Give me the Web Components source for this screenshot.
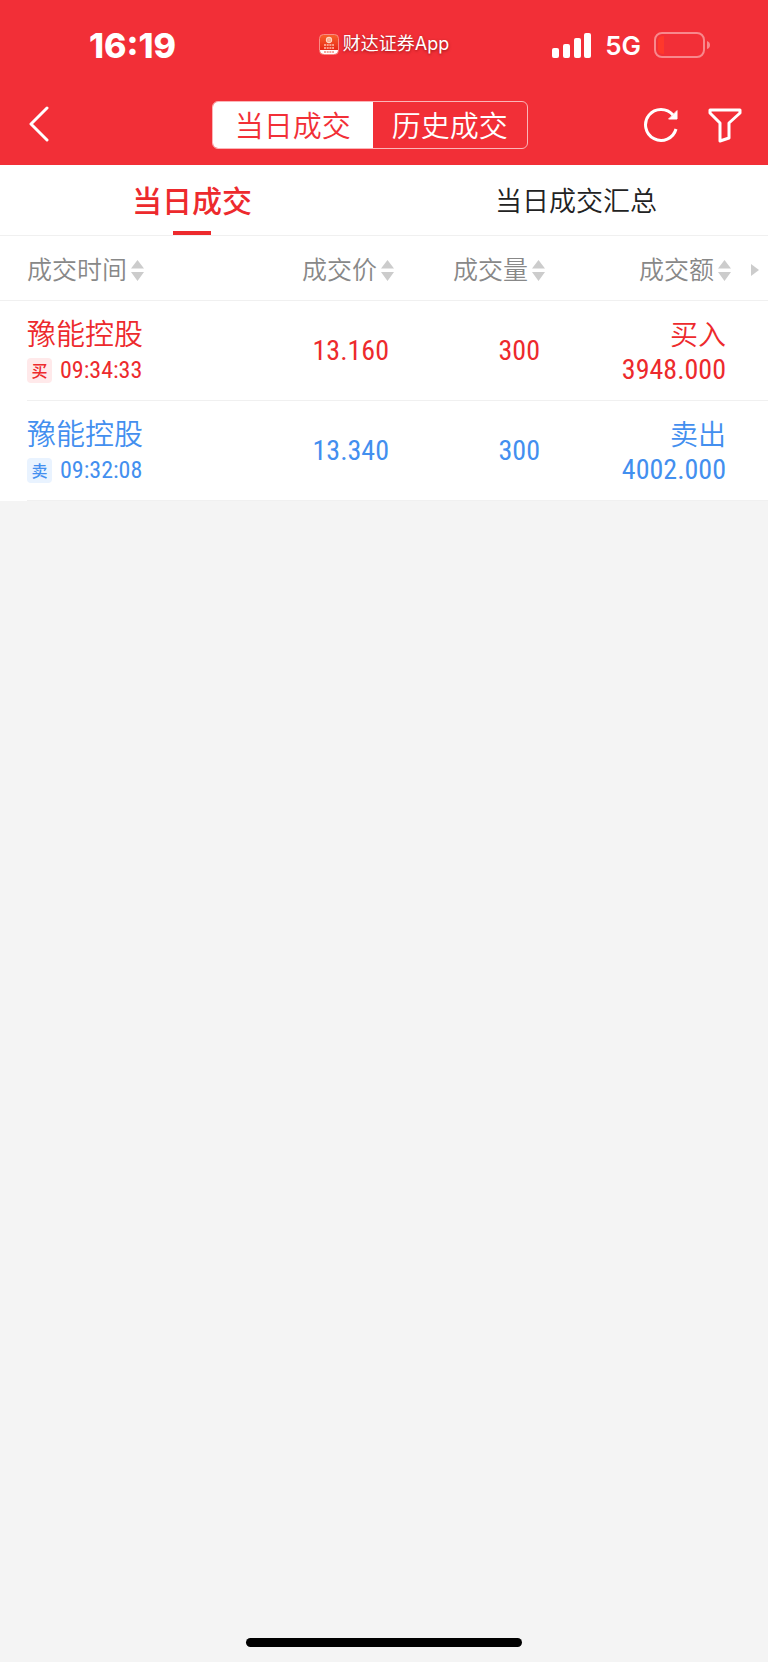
<!DOCTYPE html>
<html lang="zh-CN">
<head>
<meta charset="utf-8">
<meta name="viewport" content="width=device-width, initial-scale=1">
<title>当日成交</title>
<style>
  html {
    --red: #f22f37;
    --buy: #ed2a2d;
    --sell: #438fef;
    --line: #f0f0f0;
    --digits: "Roboto Condensed", Roboto, sans-serif;
    --strong: "Noto Sans CJK SC", sans-serif;
  }
  body {
    margin: 0;
    background: #f4f4f4;
    font-family: "Noto Sans CJK SC DemiLight", "Noto Sans CJK SC", sans-serif;
    font-weight: 350;
  }
</style>
</head>
<body>
<trade-app>
  <status-bar slot="top" time="16:19" network="5G">财达证券App</status-bar>
  <nav-bar slot="top"></nav-bar>
  <tab-bar></tab-bar>
  <deal-table></deal-table>
</trade-app>

<script>
class TradeApp extends HTMLElement {
  static styles = `
    <style>
      :host {
        display: flex;
        flex-direction: column;
        min-height: 100vh;
      }
      header {
        background: var(--red);
        color: #fff;
        padding-bottom: 16px;
      }
      main {
        flex: 1;
      }
      footer {
        display: flex;
        justify-content: center;
        padding-bottom: 15px;
      }
      .home {
        width: 36%;
        height: 9px;
        border-radius: 5px;
        background: #000;
      }
    </style>
  `;

  constructor() {
    super();
    this.attachShadow({ mode: "open" });
  }

  connectedCallback() {
    this.shadowRoot.innerHTML = `
      ${TradeApp.styles}
      <header><slot name="top"></slot></header>
      <main><slot></slot></main>
      <footer><div class="home"></div></footer>
    `;
  }
}

class StatusBar extends HTMLElement {
  static styles = `
    <style>
      :host {
        display: grid;
        grid-template-columns: 1fr auto 1fr;
        align-items: center;
        height: 87px;
        padding: 5px 58px 0;
        box-sizing: border-box;
        margin-bottom: 14px;
        font-family: Inter, "Noto Sans CJK SC", sans-serif;
      }
      svg {
        display: block;
      }
      .time {
        padding-left: 31px;
        font-size: 34px;
        line-height: 40px;
        font-weight: 800;
      }
      .app {
        display: flex;
        align-items: center;
        gap: 4px;
        padding-bottom: 4px;
        font-size: 18px;
        line-height: 24px;
        font-weight: 400;
        text-shadow: 0 1px 3px rgba(90, 0, 0, 0.6);
      }
      .right {
        display: flex;
        align-items: center;
        justify-content: flex-end;
        gap: 13px;
        font-size: 26px;
        line-height: 32px;
        font-weight: 600;
      }
    </style>
  `;

  constructor() {
    super();
    this.attachShadow({ mode: "open" });
  }

  connectedCallback() {
    this.shadowRoot.innerHTML = `
      ${StatusBar.styles}
      <div class="time">${this.getAttribute("time")}</div>
      <div class="app">
        <svg width="20" height="21" viewBox="0 0 20 21">
          <defs>
            <linearGradient id="g" x1="0" y1="0" x2="0" y2="1">
              <stop offset="0" stop-color="#f8622c"/>
              <stop offset="1" stop-color="#e3170f"/>
            </linearGradient>
          </defs>
          <rect x="0.5" y="0.5" width="19" height="20" rx="4" fill="url(#g)" stroke="#fa8b84"/>
          <path d="M1 16h18q0 4-4 4H5q-4 0-4-4z" fill="#fff"/>
          <circle cx="10" cy="6" r="2.5" fill="none" stroke="#ffd9c4" stroke-width="1.3"/>
          <path d="M10 4v4M8 6h4" stroke="#ffd9c4"/>
          <path d="M5 11h10M5 14h10" stroke="#ffc0ae" stroke-width="1.5" stroke-dasharray="2 .7"/>
          <path d="M5 18h10" stroke="#f08a80" stroke-width="1.5" stroke-dasharray="2 .7"/>
        </svg>
        <span><slot></slot></span>
      </div>
      <div class="right">
        <svg width="40" height="26" viewBox="0 0 40 26" fill="#fff">
          <rect x="0" y="15" width="7" height="10" rx="2"/>
          <rect x="11" y="11" width="7" height="14" rx="2"/>
          <rect x="22" y="5" width="7" height="20" rx="2"/>
          <rect x="32" y="0" width="7" height="25" rx="2"/>
        </svg>
        <span>${this.getAttribute("network")}</span>
        <svg width="56" height="28" viewBox="0 0 56 28">
          <rect x="1" y="1" width="49" height="24" rx="7" fill="none" stroke="#f8888c" stroke-width="2"/>
          <path d="M4 8q0-4 6-4v18q-6 0-6-4z" fill="#ff382b"/>
          <path d="M53 9q3 1 3 4t-3 4z" fill="#f8888c"/>
        </svg>
      </div>
    `;
  }
}

class NavBar extends HTMLElement {
  static styles = `
    <style>
      :host {
        display: grid;
        grid-template-columns: 6fr auto 7fr;
        align-items: center;
        padding: 0 26px 0 28px;
      }
      button {
        border: 0;
        padding: 0;
        background: none;
        color: inherit;
        font: inherit;
      }
      svg {
        display: block;
        fill: none;
        stroke: #fff;
        stroke-width: 3;
        stroke-linecap: round;
        stroke-linejoin: round;
      }
      .segment {
        display: flex;
        border: 1px solid #fbb5b8;
        border-radius: 6px;
        overflow: hidden;
      }
      .segment button {
        padding: 0 19px 2px;
        font-size: 29px;
        line-height: 44px;
      }
      .segment .on {
        padding: 0 22px 2px;
        background: #fff;
        color: var(--red);
      }
      .tools {
        display: flex;
        justify-content: flex-end;
        gap: 29px;
      }
    </style>
  `;

  constructor() {
    super();
    this.attachShadow({ mode: "open" });
  }

  connectedCallback() {
    this.shadowRoot.innerHTML = `
      ${NavBar.styles}
      <div>
        <button aria-label="返回">
          <svg width="22" height="38" viewBox="0 0 22 38"><path d="M19 4L3 20l16 16"/></svg>
        </button>
      </div>
      <div class="segment">
        <button class="on">当日成交</button>
        <button>历史成交</button>
      </div>
      <div class="tools">
        <button aria-label="刷新">
          <svg width="35" height="36" viewBox="0 0 35 36">
            <path d="M29 8A15.500 15.500 0 1 0 32 22" stroke-linecap="butt"/>
            <path d="M33 4v8h-8z" fill="#fff" stroke-width="1"/>
          </svg>
        </button>
        <button aria-label="筛选">
          <svg width="34" height="36" viewBox="0 0 34 36">
            <path d="M2 3h30v3L21 16v15l-9 3V16L2 6z"/>
          </svg>
        </button>
      </div>
    `;
  }
}

class TabBar extends HTMLElement {
  static styles = `
    <style>
      :host {
        display: flex;
        background: #fff;
        border-bottom: 1px solid var(--line);
      }
      button {
        flex: 1;
        display: flex;
        flex-direction: column;
        align-items: center;
        border: 0;
        padding: 3px 0 0;
        background: none;
        color: #222;
        font: inherit;
        font-size: 27px;
        line-height: 63px;
      }
      .on {
        color: var(--buy);
        font-family: var(--strong);
        font-size: 30px;
        font-weight: 500;
      }
      .on::after {
        content: "";
        width: 38px;
        height: 4px;
        background: var(--buy);
      }
    </style>
  `;

  constructor() {
    super();
    this.attachShadow({ mode: "open" });
  }

  connectedCallback() {
    this.shadowRoot.innerHTML = `
      ${TabBar.styles}
      <button class="on">当日成交</button>
      <button>当日成交汇总</button>
    `;
  }
}

class SortButton extends HTMLElement {
  static styles = `
    <style>
      :host {
        display: inline-block;
      }
      button {
        display: flex;
        align-items: center;
        gap: 4px;
        border: 0;
        padding: 0;
        background: none;
        color: #888;
        font: inherit;
      }
      svg {
        margin-top: 4px;
        fill: #ccc;
      }
    </style>
  `;

  constructor() {
    super();
    this.attachShadow({ mode: "open" });
  }

  connectedCallback() {
    this.shadowRoot.innerHTML = `
      ${SortButton.styles}
      <button>
        <slot></slot>
        <svg width="13" height="22" viewBox="0 0 13 22"><path d="M0 9.500L6.500 1 13 9.500zM0 13h13L6.500 22z"/></svg>
      </button>
    `;
  }
}

class DealTable extends HTMLElement {
  static styles = `
    <style>
      :host {
        display: block;
        background: #fff;
      }
      table {
        width: 100%;
        table-layout: fixed;
        border-collapse: collapse;
      }
      th, td {
        padding: 0;
        text-align: right;
        white-space: nowrap;
      }
      th {
        height: 64px;
        border-bottom: 1px solid var(--line);
        font-size: 25px;
        line-height: 36px;
        font-weight: inherit;
      }
      th:first-child, td:first-child {
        padding-left: 27px;
        text-align: left;
      }
      th svg {
        display: block;
        margin: 4px 0 0 20px;
        fill: #ccc;
      }
      td {
        height: 100px;
        padding-right: 5px;
        background: linear-gradient(var(--line), var(--line)) 0 100% / 100% 1px no-repeat;
      }
      td:first-child {
        background-position: 27px 100%;
      }
      .buy {
        color: var(--buy);
      }
      .sell {
        color: var(--sell);
      }
      .name, .side {
        padding-bottom: 2px;
        font-size: 28px;
        line-height: 36px;
      }
      .name {
        padding-bottom: 4px;
        font-size: 29px;
        line-height: 34px;
      }
      .when {
        display: flex;
        align-items: center;
        gap: 8px;
        font-size: 24px;
      }
      .tag {
        width: 25px;
        border-radius: 4px;
        background: #ffe9ea;
        font-family: var(--strong);
        font-size: 16px;
        line-height: 25px;
        font-weight: 500;
        text-align: center;
      }
      .sell .tag {
        background: #e9f3ff;
      }
      .num {
        font-family: var(--digits);
        font-weight: 400;
        line-height: 34px;
      }
      .big {
        font-size: 28px;
      }
    </style>
  `;

  deals = [
    { type: "buy", tag: "买", side: "买入", name: "豫能控股", time: "09:34:33", price: "13.160", count: "300", amount: "3948.000" },
    { type: "sell", tag: "卖", side: "卖出", name: "豫能控股", time: "09:32:08", price: "13.340", count: "300", amount: "4002.000" },
  ];

  constructor() {
    super();
    this.attachShadow({ mode: "open" });
  }

  row(deal) {
    return `
      <tr class="${deal.type}">
        <td>
          <div class="name">${deal.name}</div>
          <div class="when"><span class="tag">${deal.tag}</span><span class="num">${deal.time}</span></div>
        </td>
        <td><div class="num big">${deal.price}</div></td>
        <td><div class="num big">${deal.count}</div></td>
        <td>
          <div class="side">${deal.side}</div>
          <div class="num big">${deal.amount}</div>
        </td>
        <td></td>
      </tr>
    `;
  }

  connectedCallback() {
    this.shadowRoot.innerHTML = `
      ${DealTable.styles}
      <table>
        <colgroup>
          <col style="width: 32%">
          <col>
          <col style="width: 151px">
          <col style="width: 186px">
          <col style="width: 37px">
        </colgroup>
        <thead>
          <tr>
            <th><sort-button>成交时间</sort-button></th>
            <th><sort-button>成交价</sort-button></th>
            <th><sort-button>成交量</sort-button></th>
            <th><sort-button>成交额</sort-button></th>
            <th><svg width="8" height="14" viewBox="0 0 8 14"><path d="M0 1l8 6-8 6z"/></svg></th>
          </tr>
        </thead>
        <tbody>${this.deals.map((deal) => this.row(deal)).join("")}</tbody>
      </table>
    `;
  }
}

customElements.define("trade-app", TradeApp);
customElements.define("status-bar", StatusBar);
customElements.define("nav-bar", NavBar);
customElements.define("tab-bar", TabBar);
customElements.define("sort-button", SortButton);
customElements.define("deal-table", DealTable);
</script>
</body>
</html>
